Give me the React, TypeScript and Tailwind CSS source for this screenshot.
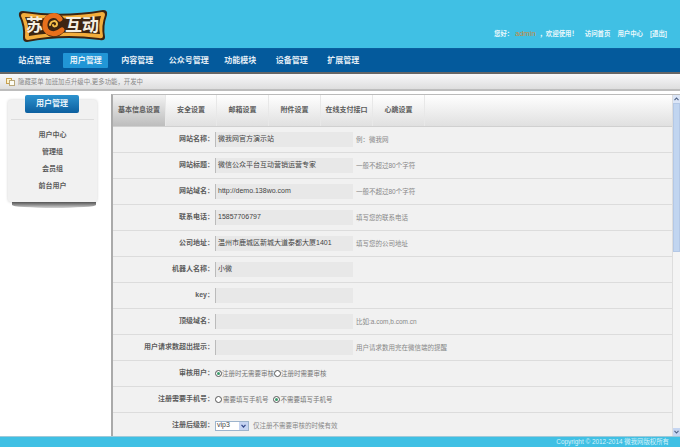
const navItems = ['站点管理', '用户管理', '内容管理', '公众号管理', '功能模块', '设备管理', '扩展管理'];
const tabs = [
  { label: '基本信息设置', w: 'w-[53px]' },
  { label: '安全设置', w: 'w-[51px]' },
  { label: '邮箱设置', w: 'w-[52px]' },
  { label: '附件设置', w: 'w-[52px]' },
  { label: '在线支付接口', w: 'w-[52px]' },
  { label: '心跳设置', w: 'w-[52px]' },
];
const sideItems = ['用户中心', '管理组', '会员组', '前台用户'];
const inputRows = [
  { label: '网站名称：', value: '微我网官方演示站', hint: '例：微我网' },
  { label: '网站标题：', value: '微信公众平台互动营销运营专家', hint: '一般不超过80个字符' },
  { label: '网站域名：', value: 'http://demo.138wo.com', hint: '一般不超过80个字符' },
  { label: '联系电话：', value: '15857706797', hint: '填写您的联系电话' },
  { label: '公司地址：', value: '温州市鹿城区新城大道泰都大厦1401', hint: '填写您的公司地址' },
  { label: '机器人名称：', value: '小微', hint: '' },
  { label: 'key：', value: '', hint: '' },
  { label: '顶级域名：', value: '', hint: '比如:a.com,b.com.cn' },
  { label: '用户请求数超出提示：', value: '', hint: '用户请求数用完在微信端的提醒' },
];

function Logo() {
  return (
    <div className="relative w-[90px] h-[34px]">
      <svg width="90" height="34" viewBox="0 0 90 34" className="block">
        <path d="M5 2 Q44 8 85 1 Q90 1 89 6 Q85 17 87 28 Q87 32 82 31 Q44 26 9 33 Q5 33 5 29 Q6 17 1 7 Q0 2 5 2Z" fill="#3b2412" />
        <path d="M6 4 Q44 10 84 3 Q87 3 87 6 Q83 17 85 27 Q85 30 81 29 Q44 24 10 31 Q7 31 7 28 Q8 17 3 7 Q3 4 6 4Z" fill="#f3ae3c" />
        <path d="M7 8 Q44 12 83 7 Q80 16 82 25 Q44 21 11 27 Q11 17 7 8Z" fill="#3d2511" />
        <circle cx="36" cy="16" r="12" fill="#3d2511" />
        <path d="M42 10 C38 4 28 6 27 15 C26 24 36 28 44 21" fill="none" stroke="#e8701c" strokeWidth="5" strokeLinecap="round" />
        <path d="M32 16 C33 11 39 11 39 15 C39 18 35 18 35 16" fill="none" stroke="#f6c04a" strokeWidth="2" strokeLinecap="round" />
      </svg>
      <span className="absolute left-[8px] top-[7px] text-[17px] leading-[20px] font-bold text-[#f4efe2]">苏</span>
      <span className="absolute left-[47px] top-[7px] text-[17px] leading-[20px] font-bold text-[#f4efe2]">互动</span>
    </div>
  );
}

function Radio({ checked }: { checked?: boolean }) {
  return (
    <span className="w-[7px] h-[7px] rounded-full border border-[#555] bg-white flex items-center justify-center shrink-0">
      {checked && <span className="w-[3px] h-[3px] rounded-full bg-[#3a9a6a]" />}
    </span>
  );
}

function Row({ label, children }: { label: string; children: React.ReactNode }) {
  return (
    <div className="h-[26px] shrink-0 flex items-center border-b border-[#dcdcdc]">
      <div className="w-[101px] shrink-0 text-right font-bold text-[#5c5c5c] text-[7px]">{label}</div>
      {children}
    </div>
  );
}

export default function App() {
  return (
    <div className="w-[680px] h-[447px] overflow-hidden flex flex-col bg-white font-['Liberation_Sans','Noto_Sans_CJK_SC',sans-serif]">
      {/* Header */}
      <div className="h-[48px] shrink-0 bg-[#40c0e4] flex justify-between pl-[18px] pr-[13px] pt-[9px]">
        <Logo />
        <div className="flex items-center gap-[7px] self-start mt-[20px] h-[9px] text-[6.4px] font-bold text-[#eaf8fc]">
          <span>
            您好：<span className="mx-[2px] text-[7.5px] font-normal text-[#c98a3a]">admin</span> ，欢迎使用！
          </span>
          <span>访问首页</span>
          <span>用户中心</span>
          <span>[退出]</span>
        </div>
      </div>

      {/* Nav */}
      <div className="h-[24px] shrink-0 bg-[#045a9c] flex pl-[8.5px] pt-[4px] border-t border-[#0a5f9f]">
        {navItems.map((item, i) => (
          <div key={item} className="w-[51.5px] flex justify-center">
            <span
              className={`h-[15px] flex items-center justify-center text-[8px] font-bold text-[#e4eff7] ${
                i === 1 ? 'w-[45px] bg-[#2196d6] rounded-[1px]' : ''
              }`}
            >
              {item}
            </span>
          </div>
        ))}
      </div>

      {/* Notice bar */}
      <div className="h-[19px] shrink-0 flex items-center gap-[3px] pl-[6px] text-[6.4px] text-[#888] bg-gradient-to-b from-[#f8f8fa] to-[#dedede] border-t-2 border-t-[#666] border-b-2 border-b-[#bdbdbd]">
        <svg width="9" height="8" viewBox="0 0 9 8" className="shrink-0">
          <rect x="0.5" y="0.5" width="5" height="5" fill="#fff3c8" stroke="#c8a050" />
          <rect x="3.5" y="2.5" width="5" height="5" fill="#fdfdf5" stroke="#b9a77a" />
        </svg>
        <span>隐藏菜单 加班加点升级中,更多功能，开发中</span>
      </div>

      {/* Body */}
      <div className="flex-1 min-h-0 flex pt-[3px]">
        {/* Sidebar */}
        <div className="w-[111px] shrink-0 pl-[8px] pt-[2px]">
          <div className="relative w-[89px] mt-[4px]">
            <div className="absolute left-[17px] -top-[5px] w-[54px] h-[18px] rounded-[2px] bg-gradient-to-b from-[#2d93cf] to-[#0b5f9f] flex items-center justify-center text-[8px] font-bold text-[#e8f3fa]">
              用户管理
            </div>
            <div className="h-[102px] rounded-[3px] bg-[#f1f1f1] shadow-[0_0_3px_rgba(0,0,0,0.2)] pt-[19px] px-[3px]">
              <div className="border-t border-[#ddd] pt-[7px] flex flex-col">
                {sideItems.map((item) => (
                  <div key={item} className="h-[17px] flex items-center justify-center text-[7px] font-bold text-[#5c5c5c]">
                    {item}
                  </div>
                ))}
              </div>
            </div>
            <div className="ml-[4px] mr-[1px] h-[6px] rounded-b-[50%] bg-gradient-to-b from-[#555] to-[#d5d5d5]" />
          </div>
        </div>

        {/* Main panel */}
        <div className="flex-1 min-w-0 flex border-l-2 border-l-[#aaa] border-t border-t-[#bbb]">
          <div className="flex-1 min-w-0 flex flex-col overflow-hidden bg-[#f1f1f1]">
            <div className="h-[32px] shrink-0 flex bg-gradient-to-b from-white to-[#e0e0e0] border-b border-[#d0d0d0]">
              {tabs.map((tab, i) => (
                <div
                  key={tab.label}
                  className={`${tab.w} shrink-0 flex items-center justify-center text-[7px] font-bold text-[#5c5c5c] border-r border-[#e8e8e8] ${
                    i === 0 ? 'bg-gradient-to-b from-[#f2f2f2] to-[#bdbdbd]' : ''
                  }`}
                >
                  {tab.label}
                </div>
              ))}
            </div>

            {inputRows.map((row) => (
              <Row key={row.label} label={row.label}>
                <div className="w-[138px] h-[15px] ml-[1px] shrink-0 bg-[#e8e8e8] border-l border-[#bbb] flex items-center pl-[2px] text-[7px] text-[#444]">
                  {row.value}
                </div>
                <span className="ml-[3px] text-[6.5px] text-[#888]">{row.hint}</span>
              </Row>
            ))}

            <Row label="审核用户：">
              <div className="ml-[1px] flex items-center text-[6.5px] text-[#777]">
                <Radio checked />
                <span>注册时无需要审核</span>
                <Radio />
                <span>注册时需要审核</span>
              </div>
            </Row>
            <Row label="注册需要手机号：">
              <div className="ml-[1px] flex items-center gap-[1px] text-[6.5px] text-[#777]">
                <Radio />
                <span className="mr-[3px]">需要填写手机号</span>
                <Radio checked />
                <span>不需要填写手机号</span>
              </div>
            </Row>
            <Row label="注册后级别：">
              <div className="ml-[1px] w-[34px] h-[10px] flex items-center justify-between bg-white border border-[#9db4cc] text-[7px] text-[#444] pl-[1px]">
                <span>vip3</span>
                <span className="w-[9px] h-full bg-[#c6d4f2] flex items-center justify-center">
                  <svg width="5" height="4" viewBox="0 0 5 4">
                    <path d="M0.5 0.8 L2.5 3 L4.5 0.8" fill="none" stroke="#33488a" strokeWidth="1.2" />
                  </svg>
                </span>
              </div>
              <span className="ml-[4px] text-[6.5px] text-[#888]">仅注册不需要审核的时候有效</span>
            </Row>
          </div>

          {/* Scrollbar */}
          <div className="w-[8px] shrink-0 flex flex-col bg-[#f4f4f4] border-l border-[#ddd]">
            <div className="h-[8px] bg-[#dce6f7] flex items-center justify-center">
              <svg width="5" height="4" viewBox="0 0 5 4">
                <path d="M0.5 3.2 L2.5 1 L4.5 3.2" fill="none" stroke="#4d6185" strokeWidth="1.1" />
              </svg>
            </div>
            <div className="h-[149px] bg-[#c1d5f0] border border-[#b4c8e6]" />
            <div className="flex-1" />
            <div className="h-[8px] bg-[#c6d6f2] flex items-center justify-center">
              <svg width="5" height="4" viewBox="0 0 5 4">
                <path d="M0.5 0.8 L2.5 3 L4.5 0.8" fill="none" stroke="#4d6185" strokeWidth="1.1" />
              </svg>
            </div>
          </div>
        </div>
      </div>

      {/* Footer */}
      <div className="h-[11px] shrink-0 bg-[#40c0e4] border-t border-[#9fc9d8] flex items-center justify-end pr-[11px] text-[6.4px] text-[#d8f2fa]">
        Copyright © 2012-2014 微我网版权所有
      </div>
    </div>
  );
}
